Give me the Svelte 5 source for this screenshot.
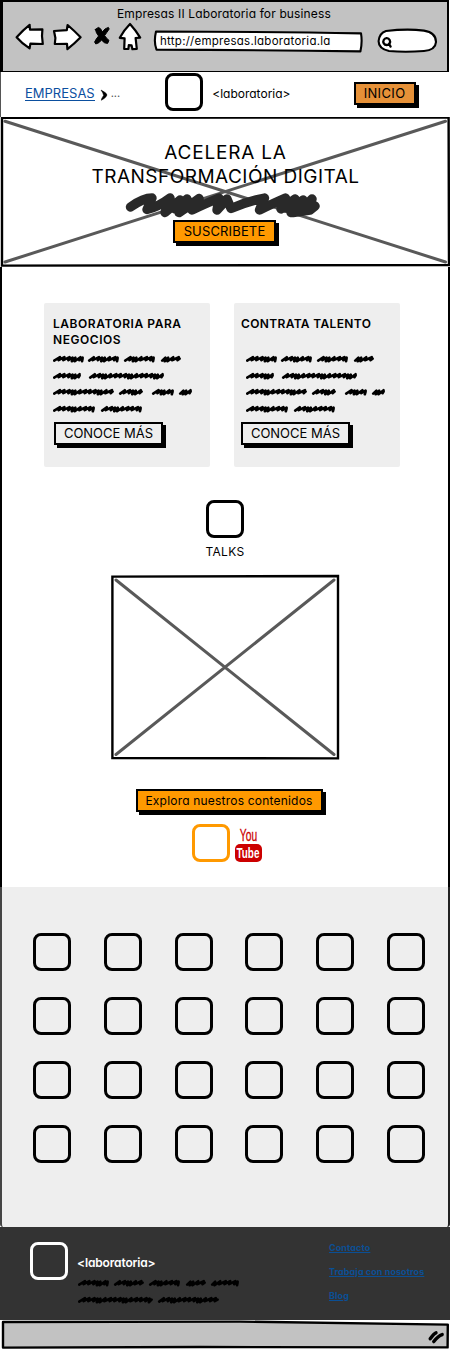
<script>
  // Widths and offsets of the scribbled words on each line of placeholder copy.
  const cardLines = [
    [[0, 31], [35, 31], [71, 31], [108, 20]],
    [[0, 28], [36, 75]],
    [[0, 61], [66, 24], [99, 22], [126, 13]],
    [[0, 42], [48, 41]]
  ];
  const footerLines = [
    [[0, 31], [36, 30], [71, 31], [108, 20], [133, 28]],
    [[0, 75], [80, 61]]
  ];

  // Uneven pen strokes, repeated until the word's width is filled.
  const strides = [5.6, 4.4, 5.2, 3, 2.8, 5];

  function scribble(words) {
    return words
      .map(([x, w], k) => {
        const end = x + w - 1.4;
        let px = x + 1.4;
        let d = `M${x + 1.2} 7.6`;
        for (let i = k; px < end - 2; i++) {
          const s = Math.min(strides[i % 6], end - px);
          const low = s < 4 ? 1.1 : 0;
          d += `L${px + s} ${4.2 + low * 0.4}L${px + s * 0.76} ${7.2 + low}`;
          px += s;
        }
        return d + `L${end} 5.6`;
      })
      .join('');
  }

  const cards = [
    { title: 'LABORATORIA PARA NEGOCIOS', cls: 'first' },
    { title: 'CONTRATA TALENTO', cls: 'second' }
  ];
  const tiles = Array.from({ length: 24 }, (_, i) => i);
</script>

<div class="window">
  <header class="chrome">
    <div class="title"><span>Empresas II Laboratoria for business</span></div>
    <div class="tools">
      <svg class="icons" width="130" height="32" viewBox="14 22 130 32" stroke="#000" stroke-width="2.2" stroke-linejoin="round" stroke-linecap="round" fill="#fff">
        <path d="M16.6 37.2 Q23 30 29.6 24.8 L30 29.6 L42.4 29.4 L42 36 L42.8 44 L30.4 43.6 L29.6 48.4 Q22 43.5 16.6 37.2Z" />
        <path d="M54 31 L66.8 30.2 L67.6 25 Q74 30.5 80.6 37.2 Q74.5 43.5 67.4 49.2 L67 43.8 L54.8 44 L55.4 38Z" />
        <path d="M95.4 29.4 L98.4 27.4 Q101 28 102.2 32 Q105 28 108.4 27.4 L109.2 29 Q106.4 33 104.6 35.6 Q106 38 109 40.4 L107.6 43.4 Q104 43.6 101.6 40 Q99.6 43 95.8 44 L94.6 42 Q96 39 98.6 36 Q96 33 95.4 29.4Z" fill="#000" stroke-width="1" />
        <path d="M130 24 Q135.5 30 140.2 37.6 L135.6 38 L136.8 48.8 L132.4 49.2 L131.6 45.4 L128.8 45.2 L128.4 48.8 L124.2 49 L124.6 38.4 L119.8 37.8 Q124 30 130 24Z" />
      </svg>
      <div class="address">
        <svg width="210" height="24" viewBox="153 30 210 24"><path d="M156 31.5 Q153.5 42 156.5 49.6 Q260 50 360.4 51.4 Q362.5 42 361 33.4 Q270 31.6 156 31.5Z" fill="#fff" stroke="#000" stroke-width="2.1" stroke-linejoin="round" /></svg>
        <span class="url">http://empresas.laboratoria.la</span>
      </div>
      <svg class="search" width="62" height="26" viewBox="377 28 62 26" fill="none" stroke="#000">
        <path d="M386 31 Q407 28.5 424 30.6 Q436 32.5 436 42 Q435.5 50 424 51 Q405 52.6 389 51 Q378.5 48.5 378.6 41 Q379.5 33 386 31Z" fill="#fff" stroke-width="2.1" />
        <path d="M386.6 38.2 a3.4 3.4 0 1 0 .2 0 M389 43.8 L390.6 46.6" stroke-width="2.3" stroke-linecap="round" />
      </svg>
    </div>
  </header>

  <nav>
    <a class="crumb">EMPRESAS</a>
    <svg class="chev" width="8" height="12" viewBox="0 0 8 12"><path d="M1 1 Q7 4 7 6 Q6 9 1.4 11.3 Q1 10 3.6 6.4 Q3.2 4 1 1Z" stroke="#000" stroke-width=".5" /></svg>
    <span class="dots">...</span>
    <i class="box logo"></i>
    <span class="brand">&lt;laboratoria&gt;</span>
    <button class="btn inicio"><span>INICIO</span></button>
  </nav>

  <section class="hero">
    <svg class="cross" viewBox="0 117 450 150" width="450" height="150">
      <path d="M5 121.2 L445.5 262 M5 262 L445.5 121.2" stroke="#595959" stroke-width="3" stroke-linecap="round" />
      <path d="M2 117.8 L448.6 117.4 L449 265 L2 265.6Z" fill="none" stroke="#000" stroke-width="2.4" />
    </svg>
    <h1><span class="l1">ACELERA LA</span><span class="l2">TRANSFORMACIÓN DIGITAL</span></h1>
    <svg class="blot" width="196" height="28" viewBox="125 191 196 28" fill="none" stroke="#292929" stroke-width="9.4" stroke-linecap="round" stroke-linejoin="round">
      <path d="M130.5 207 Q143 198 152 198 L147 209.5 Q158 207 170 198 L165 212.5 L180 200 L175 209 L187 199 L179 212.5 L190 205 L199 198.5 L192 210 Q207 203 219 198 L217 210 L227 199 L231 208.5 Q248 201 264.5 198 L259.5 210 Q274 203 285.5 198 L281 209 L295 199 L291 212.5 L303 200 L301 210 L312 199 L308 209.5 L315 206 L310 210 L293 212.5 L298 204 L285 208" />
    </svg>
    <button class="btn orange suscribe"><span>SUSCRIBETE</span></button>
  </section>

  <section class="cards">
    {#each cards as card}
      <article class={card.cls}>
        <h2>{card.title}</h2>
        <div class="copy">
          {#each cardLines as line}
            <svg width="144" height="12"><path class="scrawl" d={scribble(line)} /></svg>
          {/each}
        </div>
        <button class="btn more"><span>CONOCE MÁS</span></button>
      </article>
    {/each}
  </section>

  <section class="talks">
    <i class="box"></i>
    <span class="label">TALKS</span>
    <svg class="video" width="230" height="186" viewBox="110 574 230 186">
      <path d="M116 580 L334 754.5 M116 754.5 L334 580" stroke="#595959" stroke-width="3" stroke-linecap="round" />
      <path d="M112.4 576.6 L338 576 L338 758.4 L112.4 758Z" fill="none" stroke="#000" stroke-width="2.4" />
    </svg>
    <button class="btn orange explore"><span>Explora nuestros contenidos</span></button>
    <div class="social">
      <i class="box amber"></i>
      <div class="youtube"><span class="you">You</span><span class="tube"><b>Tube</b></span></div>
    </div>
  </section>

  <section class="grid">
    {#each tiles as t (t)}<i class="box"></i>{/each}
  </section>

  <footer>
    <i class="box white"></i>
    <div class="about">
      <span class="brand">&lt;laboratoria&gt;</span>
      {#each footerLines as line}
        <svg width="166" height="12"><path class="scrawl" d={scribble(line)} /></svg>
      {/each}
    </div>
    <ul>
      <li><a>Contacto</a></li>
      <li><a>Trabaja con nosotros</a></li>
      <li><a>Blog</a></li>
    </ul>
  </footer>

  <div class="status">
    <svg width="450" height="30" viewBox="0 1320 450 30">
      <path d="M3 1322 L240 1321.6 L447.8 1324.6 L447.6 1347.4 L200 1347 L3 1347.6Z" fill="#c2c2c2" stroke="#000" stroke-width="2.4" stroke-linejoin="round" />
      <path d="M430.2 1338.8 Q434 1333.5 436 1332.8 M433.8 1341.6 Q438 1336 442.2 1334.6" stroke="#000" stroke-width="3.4" stroke-linecap="round" fill="none" />
    </svg>
  </div>
</div>

<style>
  :global(body) { background: #fff; }
  .window {
    width: 450px; height: 1350px; overflow: hidden; box-sizing: border-box;
    display: flex; flex-direction: column;
    font-family: Inter, "Liberation Sans", sans-serif; font-feature-settings: "cv11";
    font-size: 12px; line-height: 16px; color: #000; white-space: nowrap;
    background: #fff;
  }
  .window > * { box-sizing: border-box; flex: none; }
  svg { display: block; flex: none; }
  .box { display: block; flex: none; box-sizing: border-box; width: 38px; height: 38px; border: 3px solid #000; border-radius: 8px; }

  .chrome { height: 72px; background: #c2c2c2; border: solid #000; border-width: 2px 2px 1px 3px; margin: 0 1px 0 0; }
  .title { box-sizing: border-box; height: 20px; padding: 4px 0 0 114px; line-height: 16px; letter-spacing: .14px; }
  .tools { display: flex; padding-left: 11px; }
  .address { display: grid; margin: 8px 0 0 9px; align-self: flex-start; }
  .address > * { grid-area: 1 / 1; }
  .url { padding: 3px 0 0 7px; font-size: 11.5px; letter-spacing: .26px; }
  .search { margin: 6px 0 0 14px; }

  nav { height: 45px; display: flex; align-items: flex-start; border-left: 1px solid #555; padding-left: 24px; }
  .crumb { color: #0b4f9f; margin-top: 14px; border-bottom: 1px solid #0b4f9f; line-height: 14px; font-size: 13px; }
  .chev { margin: 17px 0 0 5px; }
  .dots { margin: 13px 0 0 3px; color: #555; font-size: 11px; }
  .logo { margin: 1px 0 0 45px; }
  .brand { margin: 14px 0 0 9px; }

  .btn { display: block; flex: none; box-sizing: border-box; padding: 0; border: 2px solid #000; font: inherit; font-feature-settings: inherit; color: #000; text-align: center; box-shadow: 3px 3px 0 #000; background: #eee; line-height: 19px; font-size: 13px; }
  .btn span { display: block; height: 19px; }
  .btn.orange { background: #ff9900; }
  .inicio { width: 62px; height: 23px; margin: 10px 0 0 63px; background: #e69138; letter-spacing: .35px; }

  .hero { height: 150px; display: grid; justify-items: start; grid-template-rows: 150px; }
  .hero > * { grid-area: 1 / 1; }
  h1 { margin: 24px 0 0; width: 451px; font-weight: 400; font-size: 19px; line-height: 23.5px; display: flex; flex-direction: column; align-items: center; }
  .l1 { letter-spacing: .8px; }
  .l2 { letter-spacing: .48px; }
  .blot { margin: 74px 0 0 125px; }
  .suscribe { width: 103px; height: 23px; margin: 103px 0 0 173px; letter-spacing: .15px; }

  .cards { height: 233px; padding: 36px 0 0 42px; display: flex; gap: 24px; border: solid #000; border-width: 0 2px; }
  article { box-sizing: border-box; width: 166px; height: 164px; background: #eee; border-radius: 2px; padding: 13px 0 0 9px; white-space: normal; }
  article.second { padding-left: 7px; }
  h2 { margin: 0; height: 37px; width: 150px; font-size: 12px; line-height: 16px; font-weight: 600; letter-spacing: .54px; }
  .second h2 { letter-spacing: .34px; }
  .copy { display: flex; flex-direction: column; gap: 4.7px; height: 69px; }
  .second .copy { margin-left: 5px; }
  .scrawl { fill: none; stroke: #000; stroke-width: 2.6; stroke-linecap: round; stroke-linejoin: round; }
  .more { width: 109px; height: 23px; margin-left: 1px; }
  .second .more { margin-left: 0; }

  .talks { height: 387px; border: solid #000; border-width: 0 2px; display: flex; flex-direction: column; align-items: center; }
  .label { margin-top: 6px; letter-spacing: .35px; }
  .video { margin-top: 14px; }
  .explore { width: 187px; height: 23px; margin: 29px 0 0 8px; font-size: 12px; letter-spacing: .2px; }
  .social { display: flex; margin-top: 12px; gap: 5px; padding-left: 3px; }
  .box.amber { border-color: #ff9900; }
  .youtube { padding-top: 2px; width: 26px; font-family: "Liberation Sans", sans-serif; display: flex; flex-direction: column; align-items: center; }
  .you { color: #cc0000; font-size: 16px; line-height: 20px; height: 18px; transform: scaleX(.64); -webkit-text-stroke: .3px #cc0000; }
  .tube { width: 27px; height: 18px; background: #cc0000; border-radius: 5px; color: #fff; display: flex; justify-content: center; }
  .tube b { font-size: 15.5px; line-height: 18px; transform: scaleX(.64); }

  .grid { height: 340px; background: #eee; border-left: 2px solid #444; border-right: 2px solid #222; padding: 46px 22px 0 31px; display: grid; grid-template-columns: repeat(6, 38px); column-gap: 32.8px; grid-auto-rows: 38px; row-gap: 26px; border-radius: 0 0 3px 3px; }

  footer { height: 93px; background: #333; display: flex; align-items: flex-start; padding-left: 30px; }
  .box.white { border-color: #fff; margin-top: 15px; }
  .about { width: 166px; margin-left: 10px; }
  .about .brand { display: block; color: #fff; margin: 28px 0 6px -1px; font-weight: 600; letter-spacing: -.15px; }
  .about svg + svg { margin-top: 5px; }
  ul { margin: 14px 0 0 85px; padding: 0; list-style: none; font-size: 9px; font-weight: 700; line-height: 14px; letter-spacing: .08px; }
  li { height: 24px; }
  li a { color: #0b4f94; text-decoration: underline; }
  .status { height: 30px; }
</style>
